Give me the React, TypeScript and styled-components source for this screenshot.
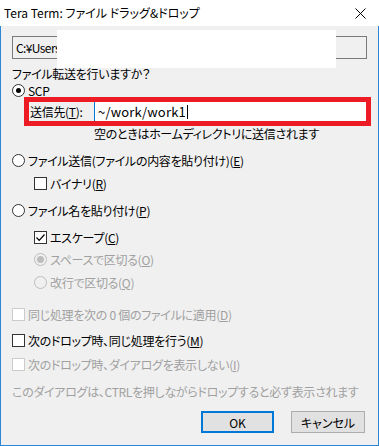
import React from 'react';
import styled, { createGlobalStyle } from 'styled-components';

const GlobalStyle = createGlobalStyle`
  html, body {
    margin: 0;
    padding: 0;
    background: #ffffff;
  }
  body {
    font-family: 'Noto Sans CJK JP', 'Noto Sans', sans-serif;
    font-size: 12px;
    color: #000000;
  }
`;

const Window = styled.div`
  width: 379px;
  height: 446px;
  display: flex;
  flex-direction: column;
  background: #ffffff;
`;

const TitleBar = styled.div`
  height: 26px;
  display: flex;
  align-items: center;
  justify-content: space-between;
  padding: 0 13px 0 4px;
  box-sizing: border-box;
  background: #ffffff;
`;

const Title = styled.div`
  font-size: 12px;
  font-feature-settings: 'palt';
  margin-top: -1px;
`;

const Body = styled.div`
  flex: 1;
  display: flex;
  flex-direction: column;
  background: #f0f0f0;
  border: 1px solid #2b87d6;
  border-top: none;
  padding: 0 12px 0 11px;
  box-sizing: border-box;
  font-feature-settings: 'palt';
  letter-spacing: -0.3px;
`;

const PathBox = styled.div`
  position: relative;
  margin-top: 10px;
  height: 23px;
  width: 355px;
  box-sizing: border-box;
  border: 1px solid #7a7a7a;
  background: #f0f0f0;
  display: flex;
  align-items: center;
  padding-left: 3px;
  letter-spacing: -0.6px;
`;

const Redaction = styled.div`
  position: absolute;
  left: 44px;
  top: -7px;
  width: 279px;
  height: 38px;
  background: #ffffff;
`;

const Row = styled.div<{ $mt: number; $indent?: number; $disabled?: boolean }>`
  display: flex;
  align-items: center;
  height: 16px;
  margin-top: ${(p) => p.$mt}px;
  padding-left: ${(p) => p.$indent || 0}px;
  color: ${(p) => (p.$disabled ? '#a0a0a0' : '#000000')};
  white-space: nowrap;
`;

const Radio = styled.span<{ $checked?: boolean; $disabled?: boolean }>`
  width: 13px;
  height: 13px;
  box-sizing: border-box;
  border-radius: 50%;
  border: 1px solid ${(p) => (p.$disabled ? '#bcbcbc' : '#333333')};
  background: ${(p) => (p.$disabled ? '#f0f0f0' : '#ffffff')};
  margin-right: 3px;
  display: flex;
  align-items: center;
  justify-content: center;
  flex-shrink: 0;

  &::after {
    content: '';
    display: ${(p) => (p.$checked ? 'block' : 'none')};
    width: ${(p) => (p.$disabled ? 7 : 5)}px;
    height: ${(p) => (p.$disabled ? 7 : 5)}px;
    border-radius: 50%;
    background: ${(p) => (p.$disabled ? '#bcbcbc' : '#000000')};
  }
`;

const Check = styled.span<{ $disabled?: boolean }>`
  width: 13px;
  height: 13px;
  box-sizing: border-box;
  border: 1px solid ${(p) => (p.$disabled ? '#cccccc' : '#333333')};
  background: #ffffff;
  margin-right: 3px;
  display: flex;
  align-items: center;
  justify-content: center;
  flex-shrink: 0;
`;

const RedFrame = styled.div`
  position: relative;
  margin-top: -1px;
  margin-left: 12px;
  width: 347px;
  height: 29px;
  display: flex;
  align-items: center;

  &::after {
    content: '';
    position: absolute;
    inset: 0;
    border: 5px solid #ed1c24;
    pointer-events: none;
  }
`;

const FieldLabel = styled.span`
  width: 70px;
  padding-left: 6px;
  box-sizing: border-box;
  flex-shrink: 0;
`;

const Edit = styled.div`
  height: 23px;
  width: 273px;
  box-sizing: border-box;
  background: #ffffff;
  border: 1px solid #0078d7;
  display: flex;
  align-items: center;
  padding-left: 3px;
  font-feature-settings: normal;
  font-size: 13px;
  letter-spacing: 0.2px;
`;

const Caret = styled.span`
  display: inline-block;
  width: 1px;
  height: 14px;
  background: #000000;
  margin-left: 1px;
`;

const Hint = styled.div`
  height: 16px;
  display: flex;
  align-items: center;
  padding-left: 82px;
  margin-top: -1px;
`;

const Buttons = styled.div`
  display: flex;
  justify-content: flex-end;
  gap: 17px;
  margin-top: 12px;
  padding-right: 1px;
  letter-spacing: 0;
`;

const Button = styled.div<{ $default?: boolean }>`
  width: ${(p) => (p.$default ? 73 : 74)}px;
  height: 22px;
  box-sizing: border-box;
  background: #e1e1e1;
  border: ${(p) => (p.$default ? '2px solid #0078d7' : '1px solid #adadad')};
  display: flex;
  align-items: center;
  justify-content: center;
`;

const CloseIcon = () => (
  <svg width="11" height="11" viewBox="0 0 11 11">
    <path d="M0.5 0.5 L10.5 10.5 M10.5 0.5 L0.5 10.5" stroke="#000" strokeWidth="1" />
  </svg>
);

const CheckMark = () => (
  <svg width="11" height="11" viewBox="0 0 11 11">
    <path d="M1.5 5.5 L4.2 8.3 L9.5 2.5" stroke="#000" strokeWidth="1.2" fill="none" />
  </svg>
);

const App = () => {
  return (
    <>
      <GlobalStyle />
      <Window>
        <TitleBar>
          <Title>Tera Term: ファイル ドラッグ&amp;ドロップ</Title>
          <CloseIcon />
        </TitleBar>
        <Body>
          <PathBox>
            C:¥Users
            <Redaction />
          </PathBox>

          <Row $mt={6}>ファイル転送を行いますか？</Row>

          <Row $mt={1}>
            <Radio $checked />
            SCP
          </Row>

          <RedFrame>
            <FieldLabel>
              送信先(<u>T</u>):
            </FieldLabel>
            <Edit>
              ~/work/work1
              <Caret />
            </Edit>
          </RedFrame>

          <Hint>空のときはホームディレクトリに送信されます</Hint>

          <Row $mt={11}>
            <Radio />
            ファイル送信(ファイルの内容を貼り付け)(<u>E</u>)
          </Row>

          <Row $mt={7} $indent={22}>
            <Check />
            バイナリ(<u>R</u>)
          </Row>

          <Row $mt={11}>
            <Radio />
            ファイル名を貼り付け(<u>P</u>)
          </Row>

          <Row $mt={11} $indent={22}>
            <Check>
              <CheckMark />
            </Check>
            エスケープ(<u>C</u>)
          </Row>

          <Row $mt={6} $indent={22} $disabled>
            <Radio $checked $disabled />
            スペースで区切る(<u>O</u>)
          </Row>

          <Row $mt={7} $indent={22} $disabled>
            <Radio $disabled />
            改行で区切る(<u>Q</u>)
          </Row>

          <Row $mt={16} $disabled>
            <Check $disabled />
            同じ処理を次の 0 個のファイルに適用(<u>D</u>)
          </Row>

          <Row $mt={10}>
            <Check />
            次のドロップ時、同じ処理を行う(<u>M</u>)
          </Row>

          <Row $mt={8} $disabled>
            <Check $disabled />
            次のドロップ時、ダイアログを表示しない(<u>I</u>)
          </Row>

          <Row $mt={11} $disabled>
            このダイアログは、CTRLを押しながらドロップすると必ず表示されます
          </Row>

          <Buttons>
            <Button $default>OK</Button>
            <Button>キャンセル</Button>
          </Buttons>
        </Body>
      </Window>
    </>
  );
};

export default App;
